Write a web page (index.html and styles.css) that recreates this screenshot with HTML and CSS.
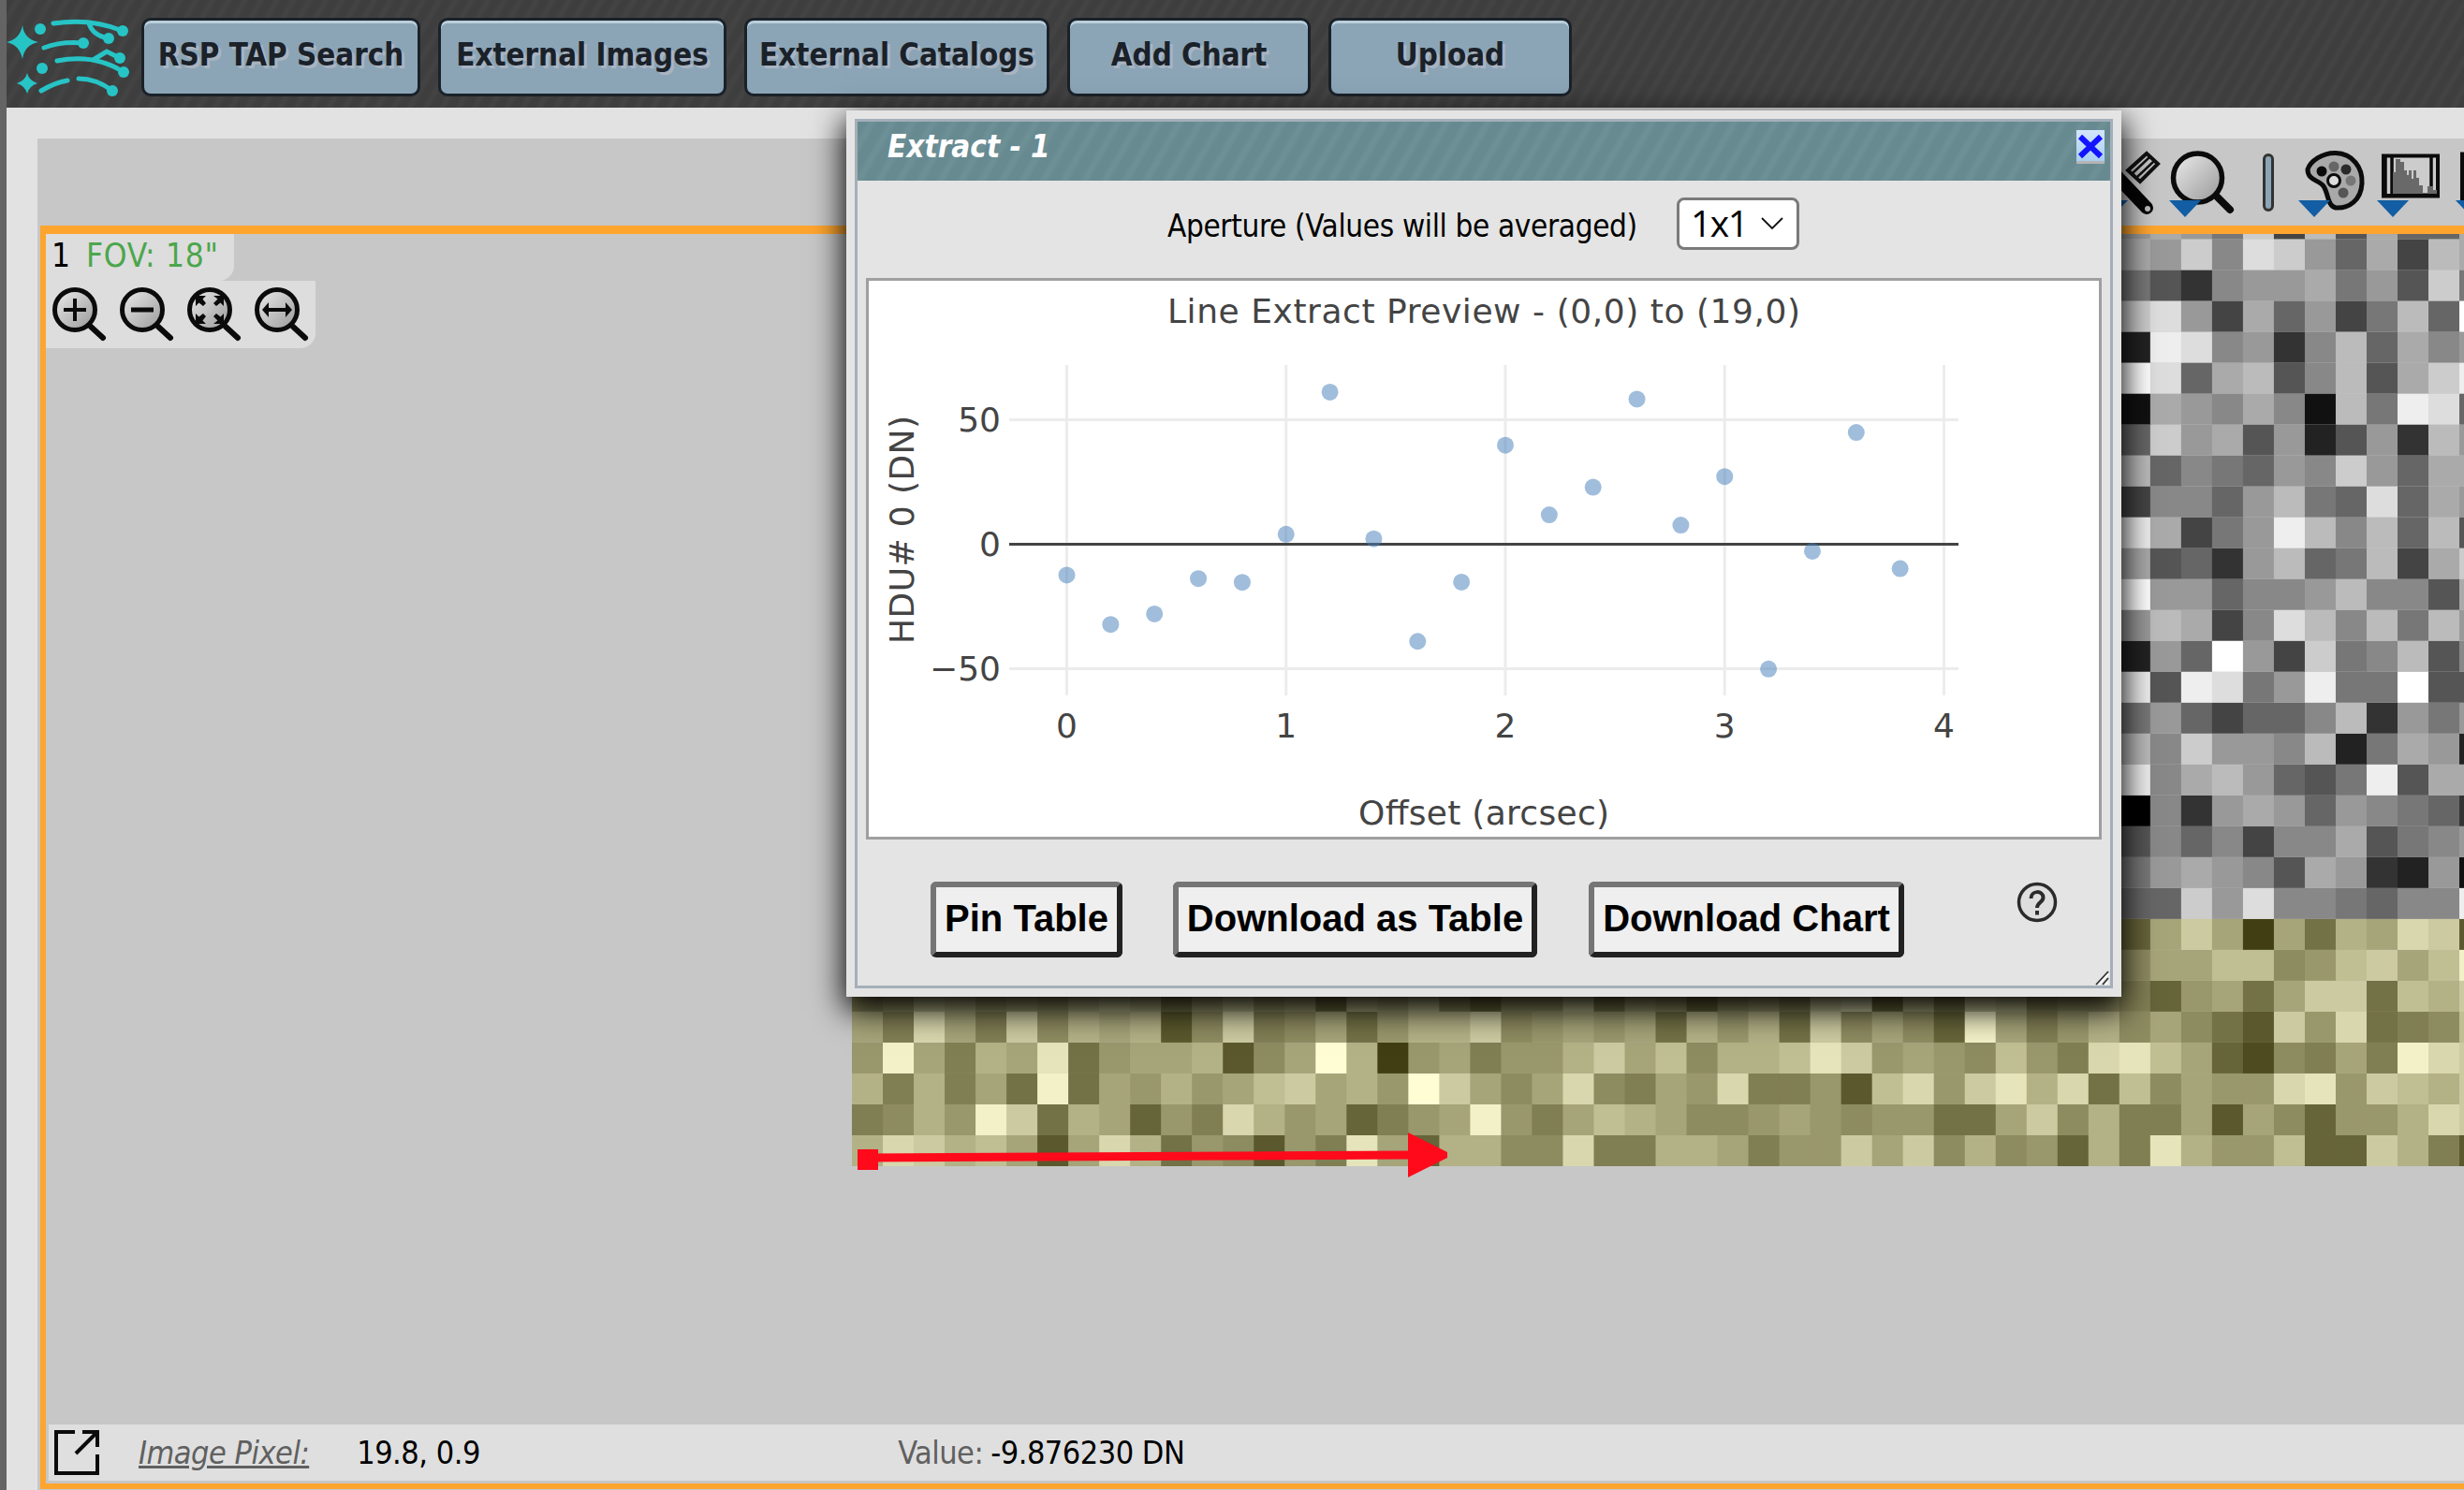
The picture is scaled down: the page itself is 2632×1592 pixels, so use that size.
FILE: index.html
```
<!DOCTYPE html>
<html lang="en">
<head>
<meta charset="utf-8">
<title>Extract</title>
<link rel="stylesheet" href="styles.css">
</head>
<body>
<svg class="defs" width="0" height="0" aria-hidden="true">
  <defs>
    <linearGradient id="lens" x1="0" y1="0" x2="1" y2="1"><stop offset="0.1" stop-color="#e4e4e4"/><stop offset="0.9" stop-color="#a0a0a0"/></linearGradient>
    <g id="glass">
      <circle cx="24" cy="24" r="21.5" fill="url(#lens)" stroke="#0b0b0b" stroke-width="5"/>
      <path d="M41 42L54 54" stroke="#0b0b0b" stroke-width="6" stroke-linecap="round"/>
    </g>
  </defs>
</svg>

<div class="app">
  <div class="edge"></div>
  <div class="page">
    <header class="banner">
      <svg class="logo" viewBox="0 0 140 115" fill="none" stroke="#27c4c6" stroke-width="5" stroke-linecap="round">
        <g fill="#27c4c6" stroke="none">
          <path d="M17 27Q19 42 34 45Q19 48 17 63Q14 48 0 45Q14 42 17 27Z"/>
          <path d="M22 78Q24 86 33 89Q24 92 22 100Q20 92 11 89Q20 86 22 78Z"/>
          <circle cx="36" cy="31" r="6"/><circle cx="38" cy="73" r="6"/>
          <circle cx="124" cy="33" r="6"/><circle cx="109" cy="41" r="6"/><circle cx="82" cy="46" r="6"/>
          <circle cx="121" cy="62" r="6"/><circle cx="125" cy="77" r="6"/><circle cx="113" cy="97" r="6"/>
        </g>
        <path d="M50 25Q90 19 124 33M88 25Q92 38 109 41M40 51Q58 44 82 46M54 65Q94 57 125 77M94 63L107 55L121 62M37 97Q52 88 65 86M77 84Q96 84 113 97"/>
      </svg>
      <nav class="menu">
        <button class="menu-btn w1">RSP TAP Search</button>
        <button class="menu-btn w2">External Images</button>
        <button class="menu-btn w3">External Catalogs</button>
        <button class="menu-btn w4">Add Chart</button>
        <button class="menu-btn w4">Upload</button>
      </nav>
    </header>

    <main class="viewer">
      <div class="toolbar">
        <svg class="tool" viewBox="0 0 84 93">
          <path d="M0 66H40L22 84Z" fill="#125da3"/>
          <path d="M40 34L60 16L72 27L53 46Z" fill="#c7c7c7" stroke="#111" stroke-width="4"/>
          <path d="M63 20L45 37M68 24L50 41" stroke="#111" stroke-width="2.500"/>
          <path d="M24 36L60 74" stroke="#050505" stroke-width="14" stroke-linecap="round"/>
          <circle cx="61" cy="75" r="3" fill="#bbb"/>
        </svg>
        <svg class="tool" viewBox="0 0 84 93">
          <circle cx="30.500" cy="42" r="26" fill="url(#lens)" stroke="#0b0b0b" stroke-width="5.500"/>
          <path d="M52 63L65 76" stroke="#0b0b0b" stroke-width="8" stroke-linecap="round"/>
          <path d="M0 66H34L17 84Z" fill="#125da3"/>
        </svg>
        <span class="separator"></span>
        <svg class="tool" viewBox="0 0 84 93">
          <path d="M10 33C13 24 26 15 40 15.500C58 16 69 31 68 48C67 66 54 75 40 74C31 72 32 58 27 51C22 44 10 45 10 33Z" fill="#a9a9a9" stroke="#0b0b0b" stroke-width="5"/>
          <circle cx="25" cy="35" r="5.500" fill="#0a0a0a"/><circle cx="38" cy="30" r="5.500" fill="#666"/><circle cx="51" cy="33" r="5.500" fill="#2a2a2a"/><circle cx="56" cy="45" r="5.500" fill="#777"/><circle cx="48" cy="58" r="5.500" fill="#555"/>
          <circle cx="38" cy="45" r="6.500" fill="#ddd" stroke="#0b0b0b" stroke-width="3"/>
          <path d="M0 66H34L17 84Z" fill="#125da3"/>
        </svg>
        <svg class="tool" viewBox="0 0 84 93">
          <rect x="7" y="18.500" width="58" height="43" fill="#ccc" stroke="#0b0b0b" stroke-width="4"/>
          <path d="M9 19V60M16 19V60M58 19V60" stroke="#0b0b0b" stroke-width="3.500"/>
          <path d="M17 60V36H20V22H25V25H29V34H32V39H34V34H37V43H39V34H42V42H45V50H49V58H54V51H60V55H64V60Z" fill="#696969"/>
          <path d="M5 59H67V63H5Z" fill="#0b0b0b"/>
          <path d="M0 66H34L17 84Z" fill="#125da3"/>
        </svg>
        <svg class="tool" viewBox="0 0 84 93">
          <rect x="7" y="16.500" width="58" height="48" fill="#ccc" stroke="#0b0b0b" stroke-width="4"/>
          <path d="M0 66H34L17 84Z" fill="#125da3"/>
        </svg>
      </div>

      <section class="frame">
        <div class="canvas">
          <svg class="pixels" id="pixels" viewBox="0 0 1722 996"></svg>
          <div class="label"><span class="num">1</span><span class="fov">FOV: 18"</span></div>
          <div class="zooms">
            <svg class="zoom" viewBox="0 0 60 62"><use href="#glass"/><path d="M12 24H36M24 12V36" stroke="#0b0b0b" stroke-width="4"/></svg>
            <svg class="zoom" viewBox="0 0 60 62"><use href="#glass"/><path d="M12 24H36" stroke="#0b0b0b" stroke-width="5"/></svg>
            <svg class="zoom" viewBox="0 0 60 62"><use href="#glass"/><path d="M9 9H20L16.500 12.500L20 17L17 20L12.500 16.500L9 20ZM39 9V20L35.500 16.500L31 20L28 17L32.500 12.500L28 9ZM9 39V28L12.500 31.500L17 28L20 31L16.500 35.500L20 39ZM39 39H28L32.500 35.500L28 31L31 28L35.500 31.500L39 28Z" fill="#0b0b0b"/></svg>
            <svg class="zoom" viewBox="0 0 60 62"><use href="#glass"/><path d="M8 24L15 16V22H33V16L40 24L33 32V26H15V32Z" fill="#0b0b0b"/></svg>
          </div>
        </div>
        <footer class="readout">
          <svg class="popout" viewBox="0 0 48 48" fill="none" stroke="#0b0b0b" stroke-width="4"><path d="M22 2H2V46H46V26M30 2H46V18M46 2L23 25"/></svg>
          <span class="ro-label link">Image Pixel:</span>
          <span class="ro-value pos">19.8, 0.9</span>
          <span class="ro-label val">Value:</span>
          <span class="ro-value">-9.876230 DN</span>
        </footer>
      </section>
    </main>
  </div>
</div>

<div class="dialog">
  <div class="dialog-body">
    <div class="titlebar">
      <span class="title">Extract - 1</span>
      <button class="close"><svg viewBox="0 0 30 33" width="30" height="33"><path d="M4 7L26 28M26 7L4 28" stroke="#1313ff" stroke-width="6"/></svg></button>
    </div>
    <div class="aperture">
      <span class="ap-label">Aperture (Values will be averaged)</span>
      <span class="select"><span class="choice">1x1</span><svg viewBox="0 0 24 14" width="24" height="14" fill="none" stroke="#111" stroke-width="1.800"><path d="M1 1L12 12L23 1"/></svg></span>
    </div>
    <svg class="chart" id="chart" viewBox="928 300 1314 594"></svg>
    <div class="actions">
      <button class="act a1">Pin Table</button>
      <button class="act a2">Download as Table</button>
      <button class="act a3">Download Chart</button>
      <svg class="help" viewBox="0 0 44 44"><circle cx="22" cy="22" r="19.500" fill="#dedede" stroke="#2b2b2b" stroke-width="3.500"/><path d="M15.500 18C15.500 9 28.500 9 28.500 17C28.500 22 22 22 22 28M22 31V35.500" fill="none" stroke="#2b2b2b" stroke-width="4"/></svg>
    </div>
    <svg class="grip" viewBox="0 0 16 16" width="16" height="16"><path d="M1 15L14 1M8 15L14 8" stroke="#333" stroke-width="1.800"/><path d="M4 15L14 4M11 15L14 12" stroke="#fff" stroke-width="1.500"/></svg>
  </div>
</div>
<script src="app.js"></script>
</body>
</html>
```
FILE: styles.css
```
* { box-sizing: border-box; }
body {
  margin: 0;
  width: 2632px;
  height: 1592px;
  overflow: hidden;
  background: #e2e2e2;
  font-family: "DejaVu Sans Condensed", "Noto Sans", sans-serif;
  color: #000;
}
button { font-family: inherit; margin: 0; }
.defs { display: block; }
.app { display: flex; height: 1592px; }
.edge { flex: none; width: 7px; background: #646464; }
.page { flex: 1; min-width: 0; display: flex; flex-direction: column; }

.banner {
  height: 115px;
  display: flex;
  align-items: flex-start;
  background: repeating-linear-gradient(120deg, #3e3e3e 0 6px, #434343 9px 12px, #3e3e3e 15px);
}
.logo { flex: none; width: 140px; height: 115px; margin-right: 4px; }
.menu { display: flex; gap: 19px; padding-top: 19px; }
.menu-btn {
  height: 84px;
  padding: 0 0 5px;
  border: 3px solid #1a2129;
  border-radius: 10px;
  background: #8ba5b7;
  box-shadow: inset 0 3px 0 #bbcfdb;
  color: #1a2129;
  font-size: 32.800px;
  font-weight: bold;
  text-shadow: 3px 3px 0 #aab4c1;
  white-space: nowrap;
}
.w1 { width: 298px; }
.w2 { width: 308px; }
.w3 { width: 326px; }
.w4 { width: 260px; }

.viewer {
  flex: 1;
  margin: 33px 0 0 33px;
  background: #c7c7c7;
  display: flex;
  flex-direction: column;
  overflow: hidden;
}
.toolbar { height: 93px; display: flex; align-items: center; padding-left: 2193px; }
.tool { flex: none; width: 84px; height: 93px; }
.separator {
  flex: none;
  width: 12px;
  height: 62px;
  margin: 0 26px 0 16px;
  border: 3px solid #333;
  border-radius: 6px;
  background: #8ba5b7;
}
.frame {
  height: 1350px;
  margin-left: 3px;
  border: solid #fea52f;
  border-width: 9px 0 6px 6px;
  display: flex;
  flex-direction: column;
}
.canvas {
  position: relative;
  flex: 1;
  display: flex;
  flex-direction: column;
  align-items: flex-start;
}
.pixels { position: absolute; left: 861px; top: 0; width: 1722px; height: 996px; overflow: visible; }
.label {
  position: relative;
  display: flex;
  gap: 17px;
  width: 201px;
  height: 50px;
  padding-left: 6px;
  border-radius: 0 0 16px 0;
  background: #ddd;
  font-size: 35px;
  line-height: 46px;
  white-space: nowrap;
}
.fov { color: #4ca64c; letter-spacing: 0.700px; }
.zooms {
  position: relative;
  display: flex;
  gap: 12px;
  width: 288px;
  height: 72px;
  padding: 7px 0 0 7px;
  border-radius: 0 0 16px 0;
  background: #ddd;
}
.zoom { flex: none; width: 60px; height: 62px; }
.readout {
  height: 60px;
  margin: 0 0 3px 3px;
  padding-left: 6px;
  background: #dfdfdf;
  display: flex;
  align-items: center;
  font-size: 34px;
  letter-spacing: -0.500px;
  white-space: nowrap;
}
.popout { flex: none; width: 48px; height: 48px; margin-right: 42px; }
.ro-label { color: #606060; }
.link { margin-right: 51px; font-style: italic; text-decoration: underline; }
.pos { width: 578px; }
.val { width: 99px; }

.dialog {
  position: absolute;
  left: 904px;
  top: 118px;
  width: 1362px;
  height: 947px;
  padding: 9px;
  background: #e4e4e4;
  box-shadow: 0 12px 32px 2px #000;
}
.dialog-body {
  position: relative;
  height: 929px;
  border: 3px solid #a4afb9;
  display: flex;
  flex-direction: column;
}
.titlebar {
  flex: none;
  height: 63px;
  padding: 9px 6px 0 32px;
  display: flex;
  justify-content: space-between;
  align-items: flex-start;
  background: repeating-linear-gradient(120deg, #678a91 0 8px, #6d9097 12px 15px, #678a91 19px);
}
.title {
  color: #fff;
  font-size: 33px;
  line-height: 35px;
  font-weight: bold;
  font-style: italic;
}
.close {
  width: 30px;
  height: 36px;
  padding: 0;
  border: 0;
  border-bottom: 3px solid #b5b5b5;
  background: linear-gradient(#d3e6fa, #a9cff2);
}
.close svg { display: block; }
.aperture {
  flex: none;
  height: 104px;
  padding: 18px 0 0 331px;
  display: flex;
  align-items: flex-start;
  font-size: 33px;
  white-space: nowrap;
}
.ap-label { width: 544px; line-height: 61px; letter-spacing: -0.360px; }
.select {
  display: flex;
  align-items: center;
  gap: 14px;
  width: 131px;
  height: 56px;
  padding-left: 12px;
  border: 3px solid #7a7a7a;
  border-radius: 8px;
  background: #fff;
}
.choice {
  padding-bottom: 3px;
  font: 500 39px "Open Sans", sans-serif;
  letter-spacing: -1.500px;
}
.chart {
  flex: none;
  width: 1320px;
  height: 600px;
  margin-left: 9px;
  border: 3px solid #9f9f9f;
  background: #fff;
  font-family: "DejaVu Sans", sans-serif;
}
.chart text { fill: #444; font-size: 36px; text-anchor: middle; }
.chart .tick-y { text-anchor: end; }
.chart .grid { stroke: #ececec; stroke-width: 3; }
.chart .zero { stroke: #444; stroke-width: 3; }
.chart .dot { fill: #427cba; opacity: 0.500; }
.actions { flex: 1; display: flex; align-items: flex-start; padding: 45px 0 0 78px; }
.act {
  height: 81px;
  padding: 0 0 2px;
  border: 6px solid;
  border-color: #757575 #222 #222 #757575;
  border-radius: 6px;
  background: #efefef;
  font: bold 40px "Liberation Sans", sans-serif;
  white-space: nowrap;
}
.a1 { width: 205px; margin-right: 54px; }
.a2 { width: 389px; margin-right: 55px; }
.a3 { width: 337px; }
.help { width: 44px; height: 44px; margin: 0 0 0 120px; }
.grip { position: absolute; right: 0; bottom: 0; }
```
FILE: app.js
```
const NS = "http://www.w3.org/2000/svg";
function add(parent, name, attrs, text) {
  const el = document.createElementNS(NS, name);
  for (const key in attrs) el.setAttribute(key, attrs[key]);
  if (text) el.textContent = text;
  parent.append(el);
}

// Image intensities, one hex digit per pixel, listed from the bottom row up.
const CELL = 33.02;
const rows = [
  [0, "9cb9a828c9476275d839966c55998577b8b6967395d977a33b952"],
  [0, "5697eb498375c9783578e758a9866787677448b695582863779cb"],
  [0, "959584e487978ab897fb868c6587c5572ac7bd9c4a6877cd7ba9b"],
  [0, "7e8598d47889268f90785779b8a699adb7876a75cda8316585ecb"],
  [0, "85c85b698926b5684799b6787849794b6863e857968642b7c456a"],
  [0, "5698676898479673879536694763675ab384a9566537848bb4a9b"],
  [41, "688aa67ab8ae"], [41, "38b808498cb2"],
  [41, "66c9d887688e"], [41, "79a985a93291"], [41, "5868488a5789"],
  [41, "0839a9698763"], [41, "e8ab9657e5aa"], [41, "b8c998b27a92"],
  [41, "7964668b3979"], [41, "e5ed79e77f55"], [41, "296f94c78b58"],
  [41, "9ba48db8b7b9"], [41, "f996889b885a"], [41, "a5639b67b4ac"],
  [41, "ea479eb8b6b5"], [41, "48869b76d6a9"], [41, "b687698c96aa"],
  [41, "6c9a592593b9"], [41, "1a98a81b7ed6"], [41, "fd6ab58b5ace"],
  [41, "2ed8938b6a89"], [41, "cd94a6947b6f"], [41, "753899a795c7"],
  [41, "a9c8dc96a4ba"], [41, "9a97c4b5a66a"]
];
const px = document.getElementById("pixels");
rows.forEach(([start, cells], r) => {
  const bottom = 996 - r * CELL;
  const top = Math.max(0, bottom - CELL);
  [...cells].forEach((c, i) => {
    const v = parseInt(c, 16) * 17;
    const rg = Math.round(64 + v * 0.75);
    const fill = r < 8 ? `rgb(${rg},${rg - 2},${Math.round(18 + v * 0.76)})` : `rgb(${v},${v},${v})`;
    add(px, "rect", { x: (start + i) * CELL, y: top, width: CELL + 0.6, height: bottom - top, fill });
  });
});
add(px, "path", { d: "M16 987L600 984", stroke: "#ff0a1b", "stroke-width": 9 });
add(px, "path", { d: "M6 978H28V1000H6ZM594 960L636 981V987L594 1008Z", fill: "#ff0a1b" });

// Line extract plot: offset in arcsec against pixel value.
const chart = document.getElementById("chart");
const X = v => 1139.5 + v * 234.25;
const Y = v => 581.5 - v * 2.66;
for (let x = 0; x <= 4; x++) {
  add(chart, "path", { class: "grid", d: `M${X(x)} 390V743` });
  add(chart, "text", { x: X(x), y: 788 }, String(x));
}
for (const y of [50, -50]) add(chart, "path", { class: "grid", d: `M1078 ${Y(y)}H2092` });
for (const y of [50, 0, -50]) add(chart, "text", { class: "tick-y", x: 1069, y: Y(y) + 12.5 }, String(y).replace("-", "\u2212"));
add(chart, "path", { class: "zero", d: `M1078 ${Y(0)}H2092` });
const values = [-12.4, -32.2, -28, -13.8, -15.3, 4, 61.1, 2.2, -39, -15.2, 39.8, 11.8, 22.9, 58.3, 7.7, 27.2, -50.1, -2.8, 44.9, -9.8];
values.forEach((v, i) => add(chart, "circle", { class: "dot", cx: X(i * 0.2), cy: Y(v), r: 9 }));
add(chart, "text", { x: 1585, y: 345, textLength: 676 }, "Line Extract Preview - (0,0) to (19,0)");
add(chart, "text", { x: 1585, y: 881, textLength: 268 }, "Offset (arcsec)");
add(chart, "text", { transform: "translate(976 566) rotate(-90)", textLength: 244 }, "HDU# 0 (DN)");
```
